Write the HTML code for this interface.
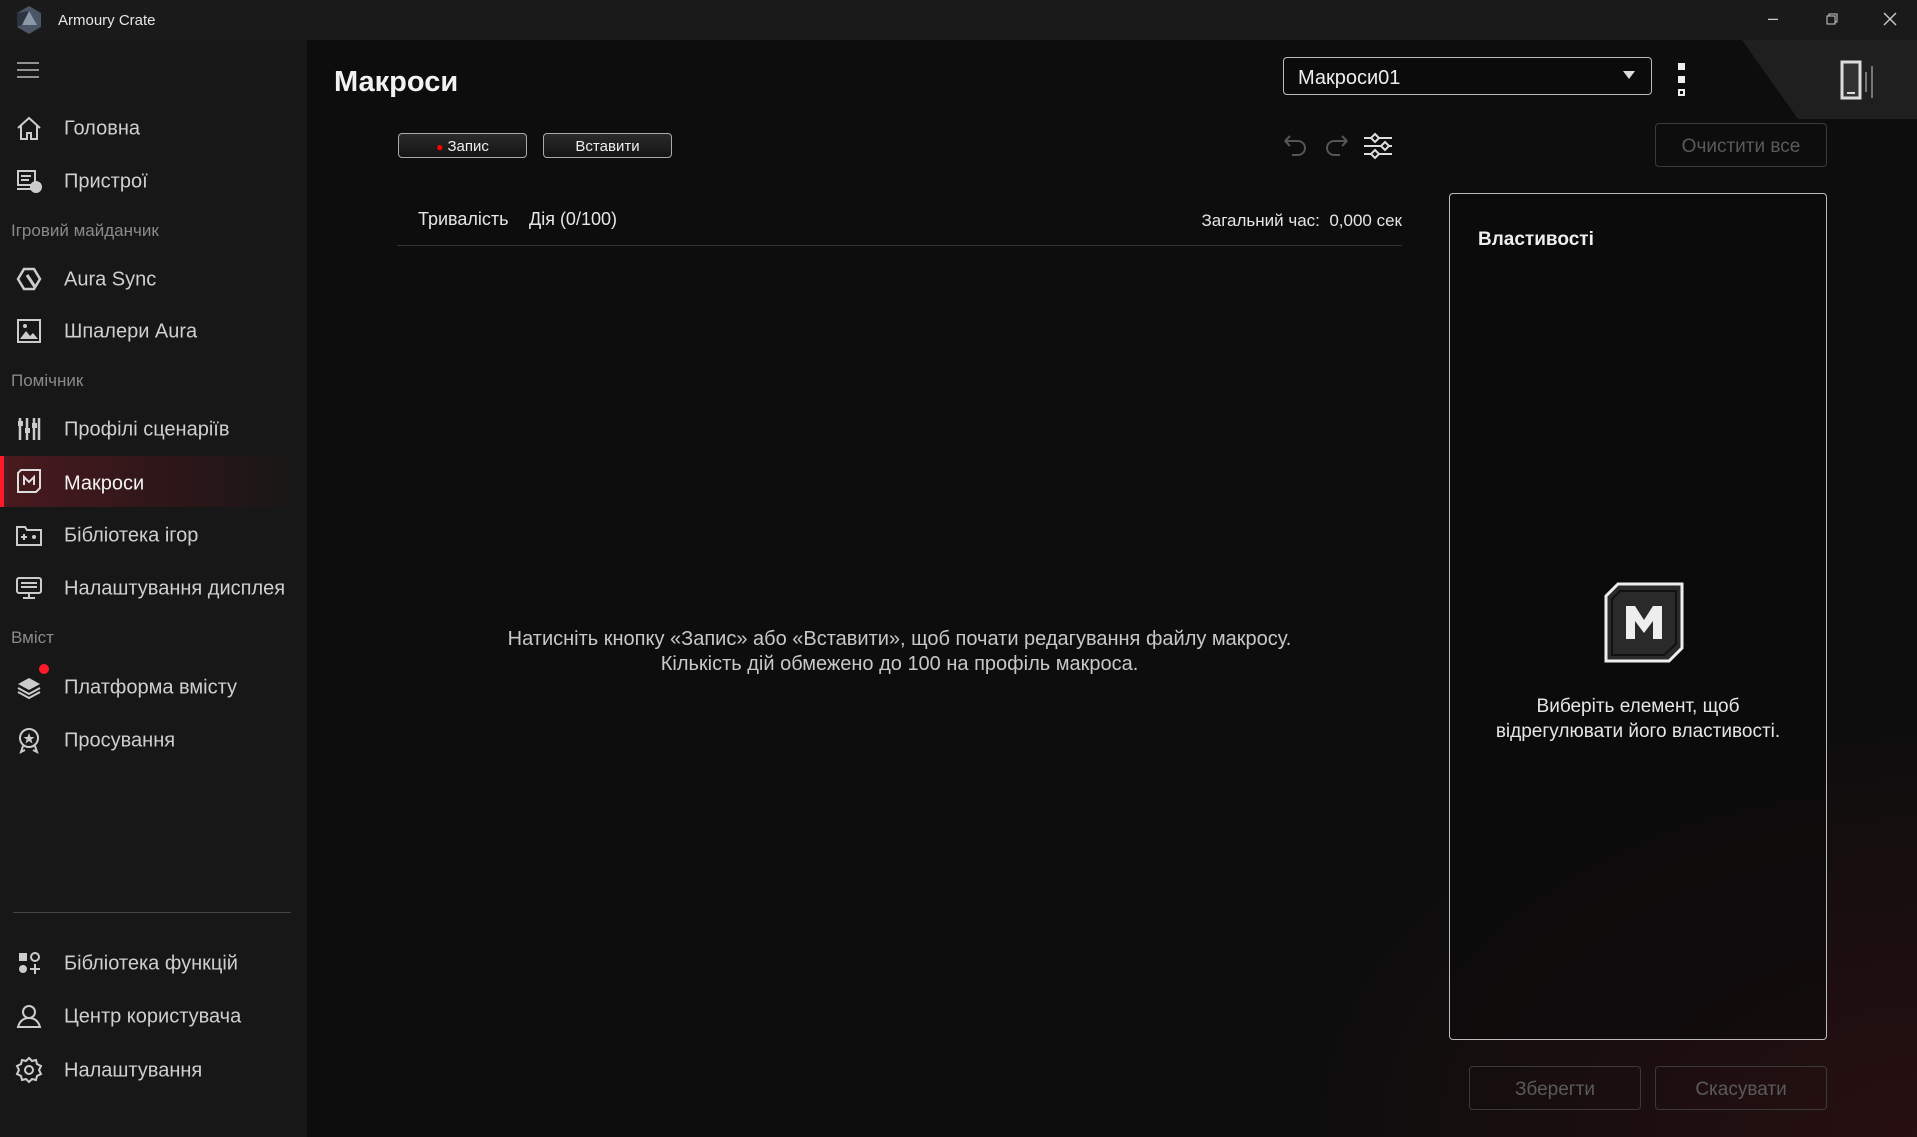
<!DOCTYPE html>
<html><head><meta charset="utf-8"><style>
*{margin:0;padding:0;box-sizing:border-box}
body{width:1917px;height:1137px;overflow:hidden;background:#0d0d0d;font-family:"Segoe UI","Liberation Sans","DejaVu Sans",sans-serif;color:#ddd;position:relative}
.a{position:absolute}
#title{left:0;top:0;width:1917px;height:40px;background:#1a1a1a}
#side{left:0;top:40px;width:307px;height:1097px;background:#171717}
.nav{position:absolute;left:64px;font-size:20px;color:#cfcfcf;white-space:nowrap;transform:translateY(-45%)}
.sec{position:absolute;left:11px;font-size:17px;color:#8a8a8a;transform:translateY(-45%)}
.ic{position:absolute;left:15px;width:28px;height:28px;transform:translateY(-50%)}
.btn{position:absolute;border:1px solid #aaa;border-radius:4px;background:linear-gradient(#2a2a2a,#141414);color:#eee;font-size:15px;text-align:center;line-height:25px}
.gbtn{position:absolute;border:1px solid #3a3a3a;border-radius:4px;color:#5a5a5a;font-size:19px;text-align:center}
</style></head><body>
<div id="title" class="a"></div>
<div class="a" style="left:1742px;top:40px;width:175px;height:79px;background:#1f1f1f;clip-path:polygon(0 0,100% 0,100% 100%,56px 100%)"></div>
<svg class="a" style="left:14px;top:5px" width="30" height="30" viewBox="0 0 30 30"><polygon points="15,1 27,8 27,22 15,29 3,22 3,8" fill="#4a5566"/><polygon points="15,6 23,20 8,20" fill="#8c98a8"/><polygon points="15,6 8,20 3,22 3,8" fill="#2c3440"/></svg>
<div class="a" style="left:58px;top:12px;font-size:15px;color:#e6e6e6">Armoury Crate</div>
<div class="a" style="left:1768px;top:8px;font-size:18px;color:#ccc">–</div>
<svg class="a" style="left:1826px;top:13px" width="12" height="12"><rect x="1" y="3" width="8" height="8" fill="none" stroke="#ccc"/><path d="M3 3V1h8v8H9" fill="none" stroke="#ccc"/></svg>
<svg class="a" style="left:1883px;top:12px" width="14" height="14"><path d="M1 1L13 13M13 1L1 13" stroke="#ccc" stroke-width="1.4"/></svg>
<div id="side" class="a"></div>
<svg class="a" style="left:17px;top:61px" width="22" height="18"><path d="M0 2H22M0 9H22M0 16H22" stroke="#bbb" stroke-width="1.5"/></svg>
<div class="a" style="left:0;top:456px;width:307px;height:51px;background:linear-gradient(90deg,#4a1a1e,#2b1618 60%,#171717)"></div>
<div class="a" style="left:0;top:456px;width:4px;height:51px;background:#ff1a2a"></div>
<svg class="ic" style="top:128px" viewBox="0 0 28 28"><path d="M3 14L14 4 25 14M6 11V25H12V19H16V25H22V11" fill="none" stroke="#ccc" stroke-width="2"/></svg>
<div class="nav" style="top:128px">Головна</div>
<svg class="ic" style="top:181px" viewBox="0 0 28 28"><rect x="3" y="4" width="17" height="14" fill="none" stroke="#ccc" stroke-width="2"/><path d="M6 9h10M6 13h8M2 22h14" stroke="#ccc" stroke-width="2"/><circle cx="21" cy="20" r="6" fill="#ccc"/></svg>
<div class="nav" style="top:181px">Пристрої</div>
<div class="sec" style="top:230px">Ігровий майданчик</div>
<svg class="ic" style="top:279px" viewBox="0 0 28 28"><path d="M9 4H19L25 14 19 24H9L3 14Z" fill="none" stroke="#ccc" stroke-width="2.5"/><path d="M12 10L20 22" stroke="#ccc" stroke-width="3"/></svg>
<div class="nav" style="top:279px">Aura Sync</div>
<svg class="ic" style="top:331px" viewBox="0 0 28 28"><rect x="3" y="3" width="22" height="22" fill="none" stroke="#ccc" stroke-width="2"/><path d="M5 22L11 14 15 19 18 16 23 22Z" fill="#ccc"/><circle cx="10" cy="9" r="2" fill="#ccc"/></svg>
<div class="nav" style="top:331px">Шпалери Aura</div>
<div class="sec" style="top:380px">Помічник</div>
<svg class="ic" style="top:429px" viewBox="0 0 28 28"><path d="M5 3V25M12 3V25M19 3V25M24 3V25" stroke="#ccc" stroke-width="2.5"/><rect x="3" y="6" width="5" height="5" fill="#ccc"/><rect x="10" y="13" width="5" height="5" fill="#ccc"/><rect x="17" y="8" width="5" height="5" fill="#ccc"/></svg>
<div class="nav" style="top:429px">Профілі сценаріїв</div>
<svg class="ic" style="top:481px" viewBox="0 0 28 28"><path d="M6 3H25V21L21 25H3V6Z" fill="none" stroke="#ddd" stroke-width="2"/><path d="M9 18V10L14 15 19 10V18" fill="none" stroke="#ddd" stroke-width="2"/></svg>
<div class="nav" style="top:483px;color:#f2f2f2">Макроси</div>
<svg class="ic" style="top:535px" viewBox="0 0 28 28"><path d="M2 6H10L12 9H26V24H2Z" fill="none" stroke="#ccc" stroke-width="2"/><path d="M6 16h6M9 13v6" stroke="#ccc" stroke-width="2"/><circle cx="19" cy="16" r="2" fill="#ccc"/></svg>
<div class="nav" style="top:535px">Бібліотека ігор</div>
<svg class="ic" style="top:588px" viewBox="0 0 28 28"><rect x="2" y="4" width="24" height="15" rx="2" fill="none" stroke="#ccc" stroke-width="2"/><path d="M6 9h16M6 13h16M8 24h12M14 19v5" stroke="#ccc" stroke-width="2"/></svg>
<div class="nav" style="top:588px">Налаштування дисплея</div>
<div class="sec" style="top:637px">Вміст</div>
<svg class="ic" style="top:687px" viewBox="0 0 28 28"><path d="M14 5L25 11 14 17 3 11Z" fill="#ccc"/><path d="M3 15L14 21 25 15M3 19L14 25 25 19" fill="none" stroke="#ccc" stroke-width="2"/></svg>
<div class="a" style="left:39px;top:664px;width:10px;height:10px;border-radius:50%;background:#ff1a2a"></div>
<div class="nav" style="top:687px">Платформа вмісту</div>
<svg class="ic" style="top:740px" viewBox="0 0 28 28"><circle cx="14" cy="12" r="9" fill="none" stroke="#ccc" stroke-width="2"/><path d="M14 7L15.5 11H19.5L16.3 13.5 17.5 17.5 14 15 10.5 17.5 11.7 13.5 8.5 11H12.5Z" fill="#ccc"/><path d="M8 20L6 26 10 24M20 20L22 26 18 24" stroke="#ccc" stroke-width="2" fill="none"/></svg>
<div class="nav" style="top:740px">Просування</div>
<div class="a" style="left:13px;top:912px;width:278px;height:1px;background:#444"></div>
<svg class="ic" style="top:963px" viewBox="0 0 28 28"><rect x="4" y="4" width="8" height="8" fill="#ccc"/><circle cx="20" cy="8" r="4" fill="none" stroke="#ccc" stroke-width="2"/><circle cx="8" cy="20" r="4" fill="#ccc"/><path d="M20 15v10M15 20h10" stroke="#ccc" stroke-width="2"/></svg>
<div class="nav" style="top:963px">Бібліотека функцій</div>
<svg class="ic" style="top:1016px" viewBox="0 0 28 28"><circle cx="14" cy="10" r="6" fill="none" stroke="#ccc" stroke-width="2"/><path d="M3 25C5 18 9 16 14 16S23 18 25 25Z" fill="none" stroke="#ccc" stroke-width="2"/></svg>
<div class="nav" style="top:1016px">Центр користувача</div>
<svg class="ic" style="top:1070px" viewBox="0 0 28 28"><path d="M14 2L17 5 21 4 22 8 26 10 24 14 26 18 22 20 21 24 17 23 14 26 11 23 7 24 6 20 2 18 4 14 2 10 6 8 7 4 11 5Z" fill="none" stroke="#ccc" stroke-width="2"/><circle cx="14" cy="14" r="4" fill="none" stroke="#ccc" stroke-width="2"/></svg>
<div class="nav" style="top:1070px">Налаштування</div>

<div class="a" style="left:307px;top:40px;width:1610px;height:1097px;background:radial-gradient(ellipse 900px 600px at 100% 100%,rgba(90,20,25,.35),transparent 70%);pointer-events:none"></div>
<div class="a" style="left:334px;top:66px;font-size:29px;font-weight:bold;color:#f2f2f2">Макроси</div>
<div class="btn" style="left:398px;top:133px;width:129px;height:25px"><span style="color:#f00;font-size:12px">●</span> Запис</div>
<div class="btn" style="left:543px;top:133px;width:129px;height:25px">Вставити</div>
<div class="a" style="left:1283px;top:57px;width:369px;height:38px;border:1px solid #bbb;border-radius:4px;background:#0b0b0b"></div>
<div class="a" style="left:1298px;top:67px;font-size:20px;color:#eee">Макроси01</div>
<div class="a" style="left:1623px;top:71px;width:0;height:0;border-left:6px solid transparent;border-right:6px solid transparent;border-top:8px solid #ddd"></div>
<div class="a" style="left:1678px;top:63px;width:7px;height:7px;background:#eee"></div>
<div class="a" style="left:1678px;top:76px;width:7px;height:7px;background:#eee"></div>
<div class="a" style="left:1678px;top:89px;width:7px;height:7px;border:2px solid #eee"></div>
<svg class="a" style="left:1840px;top:60px" width="40" height="42"><rect x="2" y="2" width="18" height="36" fill="#333" stroke="#ddd" stroke-width="3"/><path d="M7 33h8" stroke="#ddd" stroke-width="2"/><path d="M26 12v20M32 6v32" stroke="#777" stroke-width="2"/></svg>
<svg class="a" style="left:1280px;top:132px" width="120" height="30"><path d="M5 9H18A7 7 0 0 1 18 23H12M5 9L10 4M5 9L10 14" fill="none" stroke="#555" stroke-width="2"/><path d="M67 9H54A7 7 0 0 0 54 23H60M67 9L62 4M67 9L62 14" fill="none" stroke="#555" stroke-width="2"/><path d="M84 6H112M84 14H112M84 22H112" stroke="#ddd" stroke-width="2"/><path d="M95 2L99 6 95 10 91 6Z M105 10L109 14 105 18 101 14Z M95 18L99 22 95 26 91 22Z" fill="#0d0d0d" stroke="#ddd" stroke-width="2"/></svg>
<div class="gbtn" style="left:1655px;top:123px;width:172px;height:44px;line-height:46px">Очистити все</div>
<div class="a" style="left:418px;top:209px;font-size:18px;color:#e6e6e6">Тривалість</div>
<div class="a" style="left:529px;top:209px;font-size:18px;color:#e6e6e6">Дія (0/100)</div>
<div class="a" style="left:1102px;top:211px;width:300px;text-align:right;font-size:17px;color:#e6e6e6">Загальний час:&nbsp; 0,000 сек</div>
<div class="a" style="left:397px;top:245px;width:1005px;height:1px;background:#333"></div>
<div class="a" style="left:347px;top:627px;width:1105px;text-align:center;font-size:20px;line-height:25px;color:#c8c8c8">Натисніть кнопку «Запис» або «Вставити», щоб почати редагування файлу макросу.<br>Кількість дій обмежено до 100 на профіль макроса.</div>
<div class="a" style="left:1449px;top:193px;width:378px;height:847px;border:1px solid #bbb;border-radius:4px;background:rgba(10,10,10,.6)"></div>
<div class="a" style="left:1478px;top:229px;font-size:19px;font-weight:bold;color:#eee">Властивості</div>
<svg class="a" style="left:1604px;top:582px" width="80" height="81" viewBox="0 0 80 81"><path d="M14 2H78V66L65 79H2V14Z" fill="#2a2a2a" stroke="#eee" stroke-width="3"/><path d="M16 9H72V62L60 73H8V17Z" fill="none" stroke="#111" stroke-width="2"/><path d="M22 57V24H31L40 38 49 24H58V57H49V39L40 51 31 39V57Z" fill="#eee"/></svg>
<div class="a" style="left:1449px;top:694px;width:378px;text-align:center;font-size:19px;line-height:25px;color:#e6e6e6">Виберіть елемент, щоб<br>відрегулювати його властивості.</div>
<div class="gbtn" style="left:1469px;top:1066px;width:172px;height:44px;line-height:46px">Зберегти</div>
<div class="gbtn" style="left:1655px;top:1066px;width:172px;height:44px;line-height:46px">Скасувати</div>
</body></html>
